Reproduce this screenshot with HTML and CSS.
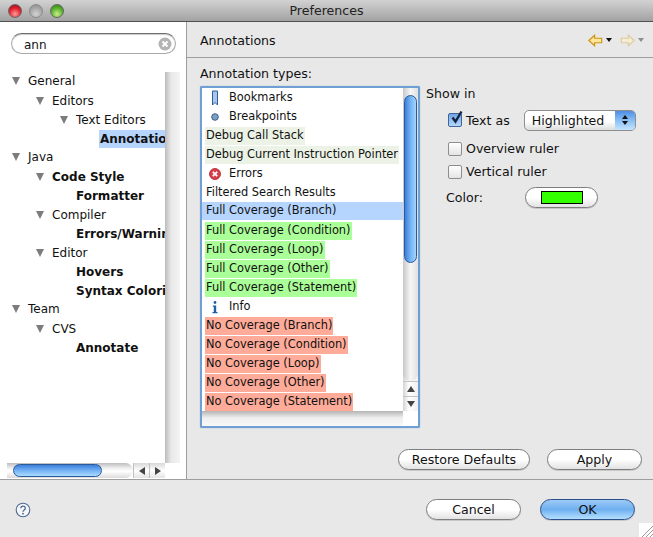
FILE: index.html
```html
<!DOCTYPE html>
<html lang="en">
<head>
  <meta charset="UTF-8">
  <title>Preferences</title>
  <link rel="stylesheet" href="styles.css">
</head>
<body>
  <div class="window">
    <div class="titlebar">
      <div class="lights">
        <span class="light red"></span>
        <span class="light off"></span>
        <span class="light green"></span>
      </div>
      <div class="title">Preferences</div>
    </div>

    <div class="main">
      <div class="side">
        <div class="search">
          <span class="search-text">ann</span>
          <span class="search-clear">
            <svg width="14" height="14" viewBox="0 0 14 14"><circle cx="7" cy="7" r="6.5" fill="#b4b4b4"/><path d="M4.5 4.500l5 5M9.500 4.500l-5 5" stroke="#fff" stroke-width="1.8"/></svg>
          </span>
        </div>
        <div class="tree-wrap">
          <div class="tree">
            <div class="node l0"><i class="twist"></i><span>General</span></div>
            <div class="node l1"><i class="twist"></i><span>Editors</span></div>
            <div class="node l2"><i class="twist"></i><span>Text Editors</span></div>
            <div class="node l3 hit"><span class="picked">Annotations</span></div>
            <div class="node l0"><i class="twist"></i><span>Java</span></div>
            <div class="node l1 hit"><i class="twist"></i><span>Code Style</span></div>
            <div class="node l2 hit leaf"><span>Formatter</span></div>
            <div class="node l1"><i class="twist"></i><span>Compiler</span></div>
            <div class="node l2 hit leaf"><span>Errors/Warnings</span></div>
            <div class="node l1"><i class="twist"></i><span>Editor</span></div>
            <div class="node l2 hit leaf"><span>Hovers</span></div>
            <div class="node l2 hit leaf"><span>Syntax Coloring</span></div>
            <div class="node l0"><i class="twist"></i><span>Team</span></div>
            <div class="node l1"><i class="twist"></i><span>CVS</span></div>
            <div class="node l2 hit leaf"><span>Annotate</span></div>
          </div>
          <div class="tree-vbar"></div>
        </div>
        <div class="hbar">
          <div class="hbar-track"><div class="hbar-thumb"></div></div>
          <div class="hbar-btn"><i class="tri-left"></i></div>
          <div class="hbar-btn"><i class="tri-right"></i></div>
        </div>
      </div>

      <div class="pane">
        <div class="pane-head">
          <div class="pane-title">Annotations</div>
          <div class="nav">
            <svg width="15" height="13" viewBox="0 0 17 14"><path d="M1 7l6.500-6v3.500h8v5h-8v3.500z" fill="#ffe699" stroke="#cf9414" stroke-width="1.300"/></svg>
            <i class="nav-drop"></i>
            <svg width="15" height="13" viewBox="0 0 17 14"><path d="M16 7l-6.500-6v3.500h-8v5h8v3.500z" fill="#f6ecd2" stroke="#dccb9f" stroke-width="1.300"/></svg>
            <i class="nav-drop dim"></i>
          </div>
        </div>

        <div class="pane-body">
          <div class="types-label">Annotation types:</div>
          <div class="columns">
            <div class="listbox">
              <div class="list-top">
                <div class="list">
                  <div class="row icon">
                    <svg width="10" height="16" viewBox="0 0 10 16"><path d="M2.500 1h5v14l-2.500-2.500-2.500 2.500z" fill="#a9c6ea" stroke="#2f5f9f"/></svg>
                    <span>Bookmarks</span>
                  </div>
                  <div class="row icon">
                    <svg width="10" height="16" viewBox="0 0 10 16"><circle cx="5" cy="8" r="3.300" fill="#7d9fc4" stroke="#3f6288"/></svg>
                    <span>Breakpoints</span>
                  </div>
                  <div class="row"><span class="mark debug">Debug Call Stack</span></div>
                  <div class="row"><span class="mark debug">Debug Current Instruction Pointer</span></div>
                  <div class="row icon">
                    <svg width="12" height="16" viewBox="0 0 12 16"><circle cx="6" cy="8" r="5.500" fill="#d8404a" stroke="#a8202c" stroke-width="0.800"/><path d="M3.800 5.800l4.400 4.400M8.200 5.800l-4.400 4.400" stroke="#fff" stroke-width="1.700"/></svg>
                    <span>Errors</span>
                  </div>
                  <div class="row"><span class="mark">Filtered Search Results</span></div>
                  <div class="row picked-row"><span class="mark">Full Coverage (Branch)</span></div>
                  <div class="row"><span class="mark full">Full Coverage (Condition)</span></div>
                  <div class="row"><span class="mark full">Full Coverage (Loop)</span></div>
                  <div class="row"><span class="mark full">Full Coverage (Other)</span></div>
                  <div class="row"><span class="mark full">Full Coverage (Statement)</span></div>
                  <div class="row icon">
                    <svg width="10" height="16" viewBox="0 0 10 16"><circle cx="5" cy="3.500" r="1.400" fill="#1f5fa8"/><path d="M2.800 6.500h3.400v6.500h1.300v1.300h-5v-1.300h1.300v-5.200h-1z" fill="#1f5fa8"/></svg>
                    <span>Info</span>
                  </div>
                  <div class="row"><span class="mark none">No Coverage (Branch)</span></div>
                  <div class="row"><span class="mark none">No Coverage (Condition)</span></div>
                  <div class="row"><span class="mark none">No Coverage (Loop)</span></div>
                  <div class="row"><span class="mark none">No Coverage (Other)</span></div>
                  <div class="row"><span class="mark none">No Coverage (Statement)</span></div>
                </div>
                <div class="vbar">
                  <div class="vbar-track"><div class="vbar-thumb"></div></div>
                  <div class="vbar-btn"><i class="tri-up"></i></div>
                  <div class="vbar-btn"><i class="tri-down"></i></div>
                </div>
              </div>
              <div class="list-foot"></div>
            </div>

            <div class="show">
              <div class="show-title">Show in</div>
              <div class="check-row first">
                <span class="check on">
                  <svg width="16" height="16" viewBox="0 0 16 16"><path d="M3.500 7.500l3 4 6-10" fill="none" stroke="#14233f" stroke-width="2.400"/></svg>
                </span>
                <span class="check-text">Text as</span>
                <div class="select">
                  <span class="select-text">Highlighted</span>
                  <span class="select-arrows"><i class="tri-up small"></i><i class="tri-down small"></i></span>
                </div>
              </div>
              <div class="check-row"><span class="check"></span><span class="check-text">Overview ruler</span></div>
              <div class="check-row"><span class="check"></span><span class="check-text">Vertical ruler</span></div>
              <div class="color-row">
                <span class="color-label">Color:</span>
                <div class="btn color-btn"><span class="swatch"></span></div>
              </div>
            </div>
          </div>
          <div class="pane-actions">
            <div class="btn restore">Restore Defaults</div>
            <div class="btn apply">Apply</div>
          </div>
        </div>
      </div>
    </div>

    <div class="footer">
      <div class="help">
        <svg width="16" height="16" viewBox="0 0 16 16"><circle cx="8" cy="8" r="6.800" fill="#f4f6f9" stroke="#4f6a92" stroke-width="1.100"/><path d="M5.800 6.300c0-3 4.500-3 4.500-.1 0 1.700-2.300 1.800-2.300 3.600" fill="none" stroke="#4f6a92" stroke-width="1.300"/><circle cx="8" cy="11.700" r=".9" fill="#4f6a92"/></svg>
      </div>
      <div class="footer-actions">
        <div class="btn cancel">Cancel</div>
        <div class="btn ok">OK</div>
      </div>
      <svg class="grip" width="14" height="14" viewBox="0 0 14 14"><rect width="14" height="14" fill="#fff"/><path d="M3 14L14 3M7 14l7-7M11 14l3-3" stroke="#9a9a9a"/></svg>
    </div>
  </div>
</body>
</html>
```

FILE: styles.css
```css
* {
  box-sizing: border-box;
}
body {
  margin: 0;
  font-family: "DejaVu Sans", sans-serif;
  font-size: 12.6px;
  color: #111;
  background: #e8e8e8;
}
.window {
  width: 653px;
  height: 537px;
  display: flex;
  flex-direction: column;
  position: relative;
  overflow: hidden;
}

/* title bar */
.titlebar {
  height: 22px;
  flex: none;
  display: flex;
  align-items: center;
  position: relative;
  background: linear-gradient(to bottom, #d2d2d2, #a2a2a2);
  border-bottom: 1px solid #505050;
}
.lights {
  display: flex;
  gap: 7px;
  padding-left: 8px;
}
.light {
  width: 14px;
  height: 14px;
  border-radius: 50%;
  border: 1px solid #666;
}
.red {
  background: radial-gradient(circle at 50% 75%, #ff9a9a, #e0202c 55%, #8c0c14);
}
.off {
  background: radial-gradient(circle at 50% 75%, #d4d4d4, #a4a4a4 60%, #8a8a8a);
  border-color: #8a8a8a;
}
.green {
  background: radial-gradient(circle at 50% 75%, #c8f08c, #58b02c 55%, #2e7a14);
}
.title {
  position: absolute;
  left: 0;
  right: 0;
  text-align: center;
  line-height: 20px;
  color: #222;
}

/* left side */
.main {
  flex: 1;
  display: flex;
  min-height: 0;
}
.side {
  width: 187px;
  flex: none;
  background: #fff;
  border-right: 1px solid #9c9c9c;
  display: flex;
  flex-direction: column;
  padding-top: 11px;
}
.search {
  width: 165px;
  height: 21px;
  margin-left: 11px;
  flex: none;
  display: flex;
  align-items: center;
  justify-content: space-between;
  padding: 0 3px 0 12px;
  border: 1px solid #a8a8a8;
  border-top-color: #6e6e6e;
  border-radius: 11px;
  box-shadow: inset 0 1px 1px #ccc;
  font-size: 12px;
}
.search-text {
  padding-top: 2px;
}
.search-clear {
  display: flex;
}
.tree-wrap {
  height: 391px;
  margin-top: 18px;
  display: flex;
  flex: none;
  font-size: 12px;
}
.tree {
  width: 165px;
  overflow: hidden;
}
.tree-vbar {
  width: 15px;
  background: linear-gradient(to right, #bcbcbc, #e8e8e8 40%, #f4f4f4);
}
.node {
  height: 19px;
  display: flex;
  align-items: center;
  white-space: nowrap;
}
.node.l0 {
  padding-left: 12px;
  padding-bottom: 2px;
}
.node.l1 {
  padding-left: 36px;
}
.node.l2 {
  padding-left: 60px;
}
.node.l2.leaf {
  padding-left: 76px;
}
.node.l3 {
  padding-left: 99px;
}
.hit {
  font-weight: bold;
}
.picked {
  display: block;
  background: #b5d5ff;
  padding: 0 1px;
  line-height: 18px;
}
.twist {
  width: 0;
  height: 0;
  margin-right: 8px;
  border-left: 4.5px solid transparent;
  border-right: 4.5px solid transparent;
  border-top: 8px solid #7c7c7c;
}
.hbar {
  display: flex;
  width: 158px;
  height: 15px;
  margin-left: 7px;
  flex: none;
}
.hbar-track {
  flex: 1;
  background: linear-gradient(to bottom, #bdbdbd, #f0f0f0 35%, #fff 55%, #dcdcdc);
  border-radius: 0 8px 8px 0;
  padding: 1px 0 1px 6px;
}
.hbar-thumb {
  width: 89px;
  height: 13px;
  border-radius: 7px;
  border: 1px solid #2a5a9c;
  background: linear-gradient(to bottom, #3c7fdc, #74b2f4 50%, #aadcff);
}
.hbar-btn {
  width: 16px;
  display: flex;
  align-items: center;
  justify-content: center;
  background: linear-gradient(to bottom, #d8d8d8, #fff 50%, #e4e4e4);
  border-left: 1px solid #c0c0c0;
}

/* arrows for the scroll bars */
.tri-left,
.tri-right,
.tri-up,
.tri-down {
  width: 0;
  height: 0;
  display: block;
  border: 4px solid transparent;
}
.tri-left {
  border-left-width: 0;
  border-right: 6px solid #444;
}
.tri-right {
  border-right-width: 0;
  border-left: 6px solid #444;
}
.tri-up {
  border-top-width: 0;
  border-bottom: 6px solid #444;
}
.tri-down {
  border-bottom-width: 0;
  border-top: 6px solid #444;
}

/* right side */
.pane {
  flex: 1;
  display: flex;
  flex-direction: column;
  min-width: 0;
}
.pane-head {
  height: 36px;
  flex: none;
  display: flex;
  align-items: center;
  justify-content: space-between;
  padding: 1px 9px 0 13px;
  border-bottom: 1px solid #9e9e9e;
}
.nav {
  display: flex;
  align-items: center;
}
.nav-drop {
  width: 0;
  height: 0;
  margin: 0 8px 0 3px;
  border-left: 3px solid transparent;
  border-right: 3px solid transparent;
  border-top: 4px solid #111;
}
.nav-drop.dim {
  margin-right: 0;
  border-top-color: #8e8e8e;
}
.pane-body {
  flex: 1;
  padding: 7px 11px 0 13px;
}
.types-label {
  line-height: 17px;
  margin-bottom: 4px;
}
.columns {
  display: flex;
  gap: 6px;
}
.listbox {
  width: 220px;
  height: 342px;
  flex: none;
  border: 2px solid #6f9fd4;
  border-radius: 2px;
  background: #fff;
  box-shadow: 0 0 1px #5a8cc4;
  display: flex;
  flex-direction: column;
}
.list-top {
  height: 323px;
  flex: none;
  display: flex;
}
.list {
  flex: 1;
  min-width: 0;
  overflow: hidden;
  font-size: 11.4px;
}
.row {
  height: 19px;
  padding-left: 3px;
  display: flex;
  align-items: center;
  white-space: nowrap;
}
.row.icon {
  padding-left: 0;
}
.row.icon span {
  margin: 0 0 2px 1px;
}
.row.icon svg {
  width: 26px;
  flex: none;
}
.mark {
  padding: 0 1px 2px;
  line-height: 16px;
}
.debug {
  background: #ecf3e6;
}
.full {
  background: #abff99;
}
.none {
  background: #ffab99;
}
.picked-row {
  background: #b5d5ff;
  height: 18px;
  margin-bottom: 1px;
}
.vbar {
  width: 15px;
  flex: none;
  display: flex;
  flex-direction: column;
  background: linear-gradient(to right, #d4d4d4, #fff 40%, #f0f0f0);
}
.vbar-track {
  flex: 1;
  padding: 7px 1px 0;
  border-radius: 0 0 8px 8px;
  background: linear-gradient(to right, #c8c8c8, #f6f6f6 50%, #e0e0e0);
}
.vbar-thumb {
  height: 168px;
  border-radius: 7px;
  border: 1px solid #2a5a9c;
  background: linear-gradient(to right, #3c7fdc, #74b2f4 50%, #a2d4fc);
}
.vbar-btn {
  height: 15px;
  flex: none;
  display: flex;
  align-items: center;
  justify-content: center;
  border-top: 1px solid #c4c4c4;
}
.list-foot {
  flex: 1;
  margin-right: 15px;
  background: linear-gradient(to bottom, #b4b4b4, #eee 45%, #fafafa);
}

/* show in */
.show {
  flex: 1;
}
.show-title {
  line-height: 15px;
  margin-bottom: 5px;
}
.check-row {
  height: 23px;
  display: flex;
  align-items: center;
  padding-left: 22px;
}
.check-row.first {
  height: 28px;
  margin-bottom: 3px;
}
.check {
  width: 14px;
  height: 14px;
  flex: none;
  margin-right: 4px;
  border: 1px solid #8e8e8e;
  border-radius: 2px;
  background: linear-gradient(to bottom, #fff, #e4e4e4);
  position: relative;
}
.check.on {
  border-color: #3f669c;
  background: linear-gradient(to bottom, #6fa4e4, #b4d8fa);
}
.check.on svg {
  position: absolute;
  left: 0;
  top: -4px;
}
.select {
  width: 112px;
  height: 21px;
  margin-left: 14px;
  display: flex;
  align-items: center;
  justify-content: space-between;
  border: 1px solid #8e8e8e;
  border-radius: 5px;
  background: linear-gradient(to bottom, #fff, #fff 55%, #dcdcdc);
  overflow: hidden;
}
.select-text {
  padding-left: 7px;
}
.select-arrows {
  width: 20px;
  height: 100%;
  display: flex;
  flex-direction: column;
  align-items: center;
  justify-content: center;
  gap: 2px;
  background: linear-gradient(to bottom, #4d8ee4, #8ac0f6 50%, #c4e4ff);
}
.small {
  border-left-width: 3px;
  border-right-width: 3px;
}
.tri-up.small {
  border-bottom-width: 4px;
  border-bottom-color: #111;
}
.tri-down.small {
  border-top-width: 4px;
  border-top-color: #111;
}
.color-row {
  display: flex;
  align-items: center;
  padding-left: 20px;
  margin-top: 4px;
}
.color-label {
  width: 79px;
}

/* buttons */
.btn {
  height: 21px;
  display: flex;
  align-items: center;
  justify-content: center;
  border: 1px solid #7e7e7e;
  border-radius: 11px;
  background: linear-gradient(to bottom, #fff, #fff 50%, #e2e2e2);
  box-shadow: 0 1px 0 #c8c8c8;
}
.color-btn {
  width: 73px;
}
.swatch {
  width: 42px;
  height: 13px;
  background: #33ff00;
  border: 1px solid #000;
}
.pane-actions {
  display: flex;
  justify-content: flex-end;
  gap: 17px;
  margin-top: 21px;
}
.restore {
  width: 132px;
}
.apply {
  width: 95px;
}

/* footer */
.footer {
  height: 58px;
  flex: none;
  display: flex;
  align-items: center;
  justify-content: space-between;
  padding: 2px 18px 0 15px;
  border-top: 1px solid #9e9e9e;
  position: relative;
}
.help {
  display: flex;
}
.footer-actions {
  display: flex;
  gap: 19px;
}
.cancel,
.ok {
  width: 95px;
}
.ok {
  border-color: #2c4f8c;
  background: linear-gradient(to bottom, #9ccaf6, #6fb0f0 50%, #b4e0ff);
}
.grip {
  position: absolute;
  right: 0;
  bottom: 0;
}
```
